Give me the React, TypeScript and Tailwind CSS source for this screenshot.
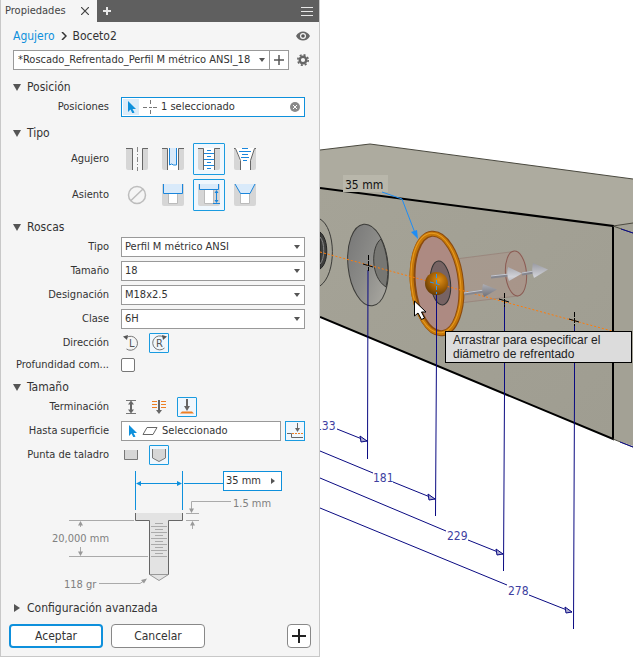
import { useState } from "react";
import type { ReactNode } from "react";

const threadFields = [
  { id: "thread-type", label: "Tipo", value: "Perfil M métrico ANSI" },
  { id: "thread-size", label: "Tamaño", value: "18" },
  { id: "thread-designation", label: "Designación", value: "M18x2.5" },
  { id: "thread-class", label: "Clase", value: "6H" },
];

const Walls = () => (
  <>
    <path d="M0 1h7v22H2a2 2 0 0 1-2-2zM15 1h7v20a2 2 0 0 1-2 2h-5z" fill="#d6d6d6" />
  </>
);

const holeTypes = [
  {
    name: "Agujero simple",
    icon: (
      <>
        <Walls />
        <path d="M7 1h9v22H7z" fill="#f5f5f5" />
        <path d="M0 1.500h6.500V23M22 1.500h-5.500V23" stroke="#666" fill="none" />
        <path d="M11.500 0v24" stroke="#888" strokeDasharray="5 2 1 2" />
      </>
    ),
  },
  {
    name: "Agujero de paso",
    icon: (
      <>
        <Walls />
        <path d="M6 1h10v22H6z" fill="#fff" />
        <path d="M7.500 1h7v16l-3 1-2-1-2 1z" fill="#d9eafa" />
        <path d="M7.500 1v17l2-1 2 1h3V1" stroke="#1a86dc" fill="none" />
        <path d="M0 1.500h5.500V23M22 1.500h-5.500V23" stroke="#666" fill="none" />
      </>
    ),
  },
  {
    name: "Agujero roscado",
    icon: (
      <>
        <Walls />
        <path d="M6 1h10v22H6z" fill="#fff" />
        <path d="M0 1.500h5.500V23M22 1.500h-5.500V23" stroke="#666" fill="none" />
        <path d="M6 6.500h10M6 12.500h10M6 18.500h10M9 3.500h4M9 9.500h4M9 15.500h4M9 21.500h4" stroke="#1a86dc" />
      </>
    ),
  },
  {
    name: "Agujero con rosca cónica",
    icon: (
      <>
        <path d="M0 1h22v20a2 2 0 0 1-2 2H2a2 2 0 0 1-2-2z" fill="#d6d6d6" />
        <path d="M1 1h20l-5 13v9H6v-9z" fill="#fff" />
        <path d="M0 1.500h1.500l5 12V23M22 1.500h-1.500l-4 12V23" stroke="#666" fill="none" />
        <path d="M8 1.500h6M5 4.500h12M8 7.500h6M7 10.500h8M9 13.500h4" stroke="#1a86dc" />
      </>
    ),
  },
];

const seatTypes = [
  {
    name: "Ninguno",
    icon: <path d="M5 17.500 17 6M19.500 12a8.500 8.500 0 1 1-17 0 8.500 8.500 0 0 1 17 0z" stroke="#bdbdbd" strokeWidth="1.500" fill="none" />,
  },
  {
    name: "Caja",
    icon: (
      <>
        <path d="M0 1h22v20a2 2 0 0 1-2 2H2a2 2 0 0 1-2-2z" fill="#d6d6d6" />
        <path d="M6.500 10v10.500h9V10" fill="#fff" stroke="#bbb" />
        <path d="M1.500 1h19v9.500h-19z" fill="#d9eafa" />
        <path d="M1.500 1v9.500h19V1" stroke="#1a86dc" fill="none" />
      </>
    ),
  },
  {
    name: "Refrentado",
    icon: (
      <>
        <path d="M0 1h22v20a2 2 0 0 1-2 2H2a2 2 0 0 1-2-2z" fill="#d6d6d6" />
        <path d="M6.500 7v13.500h9V7" fill="#fff" stroke="#bbb" />
        <path d="M1.500 1h19v5.500h-19z" fill="#d9eafa" />
        <path d="M1.500 1v5.500h19V1M15 20.500h7M18.500 8v11" stroke="#1a86dc" fill="none" />
        <path d="m16.500 10 2-3 2 3zM16.500 17l2 3 2-3z" fill="#1a86dc" />
      </>
    ),
  },
  {
    name: "Avellanado",
    icon: (
      <>
        <path d="M0 1h22v20a2 2 0 0 1-2 2H2a2 2 0 0 1-2-2z" fill="#d6d6d6" />
        <path d="M6.500 10v10.500h9V10" fill="#fff" stroke="#bbb" />
        <path d="M1 1h20l-5 9.500H6.500z" fill="#d9eafa" />
        <path d="m1 1 5.500 9.500H16L21 1" stroke="#1a86dc" fill="none" />
      </>
    ),
  },
];

const directions = [
  {
    name: "Rosca izquierda",
    icon: (
      <>
        <path d="M5.500 4.500a7 7 0 1 1 0 11.500" stroke="#777" fill="none" />
        <path d="M2 3.500 7 2l-1 5z" fill="#555" />
        <text x="8" y="14" fontSize="11" fill="#555">L</text>
      </>
    ),
  },
  {
    name: "Rosca derecha",
    icon: (
      <>
        <path d="M14.500 4a7 7 0 1 0 1 11" stroke="#777" fill="none" />
        <path d="M18 3.500 13 2l1 5z" fill="#555" />
        <text x="7" y="14" fontSize="11" fill="#555">R</text>
      </>
    ),
  },
];

const terminations = [
  {
    name: "Distancia",
    icon: (
      <>
        <path d="M5 3.500h10M5 16.500h10" stroke="#777" />
        <path d="M10 5v10" stroke="#666" strokeWidth="2" />
        <path d="m7 7.500 3-4 3 4zM7 12.500l3 4 3-4z" fill="#666" />
      </>
    ),
  },
  {
    name: "Pasante",
    icon: (
      <>
        <path d="M3 4.500h5M3 7.500h5M3 10.500h5M12 4.500h5M12 7.500h5M12 10.500h5" stroke="#ee7f24" />
        <path d="M10 3v12" stroke="#666" strokeWidth="2" />
        <path d="m7 13 3 4 3-4z" fill="#666" />
      </>
    ),
  },
  {
    name: "Hasta",
    icon: (
      <>
        <path d="M5 14.500h10l2 2H3z" fill="#ee7f24" />
        <path d="M10 2v9" stroke="#666" strokeWidth="2" />
        <path d="m7 9 3 5 3-5z" fill="#666" />
      </>
    ),
  },
];

const drillPoints = [
  { name: "Plana", icon: <path d="M3.500 5v9.500h13V5" fill="#d6d6d6" stroke="#777" /> },
  { name: "Angular", icon: <path d="M3.500 4v9l6.500 3.500 6.500-3.500V4" fill="#d6d6d6" stroke="#777" /> },
];

const dimensions = [
  { value: "133", x: 315, y: 430, line: "M337 429 367 441", end: [367, 441] },
  { value: "181", x: 373, y: 482, line: "M320 451 373 473M393 482 435 499", end: [435, 499] },
  { value: "229", x: 447, y: 540, line: "M320 478 446 531M468 540 503 554", end: [503, 554] },
  { value: "278", x: 508, y: 595, line: "M320 508 507 585M529 595 572 612", end: [572, 612] },
];

const Caret = () => (
  <svg className="pointer-events-none absolute right-1 top-2 h-1 w-2" viewBox="0 0 8 4">
    <path d="M1 0h6L4 4z" fill="#555" />
  </svg>
);

const Cursor = () => (
  <svg className="h-3 w-3" viewBox="0 0 12 12">
    <path d="M3 0v11l2.500-2.500L7.500 12.500l2-1-2-3.500H11z" fill="#0e90dc" />
  </svg>
);

const Section = ({ title, open = true }: { title: string; open?: boolean }) => (
  <button type="button" className="flex h-5 w-full items-center gap-1.5 pl-3 text-[12px] leading-5">
    <svg className="h-2 w-2" viewBox="0 0 8 8">
      <path d={open ? "M0 1h8L4 8z" : "M1 0v8l6-4z"} fill="#555" />
    </svg>
    {title}
  </button>
);

const Row = ({ label, htmlFor, children }: { label: string; htmlFor?: string; children: ReactNode }) => (
  <div className="flex items-center gap-3 pr-[14px]">
    {htmlFor ? (
      <label htmlFor={htmlFor} className="w-[108px] shrink-0 whitespace-nowrap text-right">
        {label}
      </label>
    ) : (
      <span className="w-[108px] shrink-0 whitespace-nowrap text-right">{label}</span>
    )}
    {children}
  </div>
);

type Option = { name: string; icon: ReactNode };

const IconGroup = ({ options, initial, large }: { options: Option[]; initial: number; large?: boolean }) => {
  const [active, setActive] = useState(initial);
  return (
    <div className={large ? "flex gap-1" : "flex gap-2"}>
      {options.map((item, index) => (
        <button
          key={item.name}
          type="button"
          aria-label={item.name}
          aria-pressed={index === active}
          onClick={() => setActive(index)}
          className={`flex items-center justify-center rounded-[1px] border ${large ? "size-8" : "size-5"} ${
            index === active ? "border-[#1a9be0] bg-[#f0f7fd]" : "border-transparent"
          }`}
        >
          {large ? (
            <svg className="h-6 w-[22px]" viewBox="0 0 22 24">{item.icon}</svg>
          ) : (
            <svg className="size-5 shrink-0" viewBox="0 0 20 20">{item.icon}</svg>
          )}
        </button>
      ))}
    </div>
  );
};

const HoleDiagram = () => (
  <div className="relative h-[133px]">
    <svg className="h-full w-[318px]" viewBox="1 465 318 133" fontSize="11" fill="none">
      <path d="M135.500 513h47v7.500H168.500v54l-9.500 6-9.500-6v-54h-14z" fill="#e3e3e3" />
      <path d="M135.500 513v7.500h14V575M182.500 513v7.500h-14V575" stroke="#666" />
      <path d="m149.500 574.500 9.500 6 9.500-6z" stroke="#999" />
      <path
        d="M151 526.500h16M151 532.500h16M151 538.500h16M151 544.500h16M151 550.500h16M151 556.500h16M155 523.500h8M155 529.500h8M155 535.500h8M155 541.500h8M155 547.500h8M155 553.500h8"
        stroke="#aaa"
      />
      <path d="M135.500 471v39M182.500 471v39M137 483.500h44M184 483.500h39" stroke="#0e90dc" />
      <path d="m136 483.500 5-2.500v5zM182 483.500l-5-2.500v5z" fill="#0e90dc" />
      <path
        d="M69 520.500h65M69 556.500h79M80.500 522v5M80.500 547v8M99 583.500h41l6-4M231 501.500h-39.500V511M186 513.500h13M186 520.500h13M192.500 522v7"
        stroke="#aaa"
      />
      <path
        d="m78 525.500 2.500-4.500 2.500 4.500zM78 551.500l2.500 4.500 2.500-4.500zM189 508.500l2.500 4.500 2.500-4.500zM190 525.500l2.500-4.500 2.500 4.500zM141 580l6-1.500-3 5z"
        fill="#999"
      />
      <text x="52" y="542" fill="#808080">20,000 mm</text>
      <text x="233" y="507" fill="#808080">1.5 mm</text>
      <text x="64" y="588" fill="#808080">118 gr</text>
    </svg>
    <div className="absolute left-[222px] top-1.5 flex h-5 w-[59px] items-center border border-[#0e90dc] bg-white">
      <input aria-label="Diámetro de refrentado" defaultValue="35 mm" className="w-full min-w-0 pl-0.5 outline-none" />
      <svg className="mr-1.5 h-1.5 w-1 shrink-0" viewBox="0 0 4 6">
        <path d="M0 0v6l4-3z" fill="#555" />
      </svg>
    </div>
  </div>
);

const Scene = () => (
  <svg className="absolute inset-0 h-full w-full" viewBox="320 0 313 657" preserveAspectRatio="xMinYMin slice" fill="none">
    <defs>
      <linearGradient id="front" x1="0" y1="0" x2="1" y2="1">
        <stop offset="0" stopColor="#a5a397" />
        <stop offset="1" stopColor="#9f9d91" />
      </linearGradient>
      <linearGradient id="bore" x1="0" y1="0" x2="1" y2="1">
        <stop offset="0" stopColor="#747474" />
        <stop offset="0.500" stopColor="#8c8c89" />
        <stop offset="1" stopColor="#b0aea6" />
      </linearGradient>
      <radialGradient id="ball" cx="0.600" cy="0.350" r="0.700">
        <stop offset="0" stopColor="#dd8f18" />
        <stop offset="0.500" stopColor="#a76306" />
        <stop offset="1" stopColor="#643a04" />
      </radialGradient>
      <linearGradient id="cone" x1="0" y1="0" x2="0" y2="1">
        <stop offset="0" stopColor="#999aa2" />
        <stop offset="0.400" stopColor="#d0d1d7" />
        <stop offset="1" stopColor="#6f7078" />
      </linearGradient>
    </defs>

    <path d="M320 150 370 144 633 179V224L613 226 320 188z" fill="#adab9f" />
    <path d="M613 226 633 223V446L613 439z" fill="#a3a195" />
    <path d="M320 188 613 226V439L320 317z" fill="url(#front)" />
    <path d="M320 150 370 144 633 179M613 226 633 223" stroke="#4a493f" />
    <path d="M320 188 613 226V439L320 317" stroke="#000" strokeWidth="2" />
    <path d="m613 226 20 7M613 439l20 8" stroke="#4a493f" />
    <path d="m621 229 12 4M620 442l13 5" stroke="#0a0a8c" />

    <path d="M320 219c16 9 17 55 0 67" stroke="#3b3b38" />
    <path d="M320 232c9 7 9 31 0 37z" fill="#3f3f3d" stroke="#222" />
    <path d="M320 237c5 5 5 22 0 27" stroke="#888" />
    <ellipse cx="368" cy="265" rx="20" ry="41" transform="rotate(-6 368 265)" fill="url(#bore)" stroke="#3b3b38" />
    <path d="M381 239c-10 7-11 38 5 48 4-16 1-36-5-48z" fill="#777773" stroke="#3b3b38" />

    <path d="M440 261 514 251.500A10.500 22 0 0 1 518 296L443 305z" fill="#b08a80" fillOpacity="0.300" />
    <path d="m440 261 74-9.500M443 305l75-9" stroke="#927a72" strokeOpacity="0.600" />
    <ellipse cx="516" cy="273.500" rx="10.500" ry="22.500" transform="rotate(-5 516 273.500)" fill="#b08a80" fillOpacity="0.250" stroke="#8b5a52" />

    <ellipse cx="437" cy="283.500" rx="24" ry="50" transform="rotate(-6 437 283.500)" fill="#ad8a82" stroke="#8a4a10" strokeWidth="6" />
    <ellipse cx="436.500" cy="283.500" rx="24.500" ry="50" transform="rotate(-6 436.500 283.500)" stroke="#c47708" strokeWidth="4" />
    <ellipse cx="436" cy="283" rx="24.500" ry="50" transform="rotate(-6 436 283)" stroke="#e89b24" />
    <ellipse cx="440.500" cy="283" rx="10" ry="22" transform="rotate(-6 440.500 283)" fill="#776363" stroke="#333" />
    <path d="M320 252 612 331" stroke="#ff7c0a" strokeDasharray="2 2" />
    <circle cx="436.500" cy="283.500" r="11.500" fill="url(#ball)" />

    <path d="m464 294 20-3M491 277l18-2M522 274l12-2" stroke="#85868e" strokeWidth="3" />
    <path d="m464 293 20-3M491 276l18-2M522 273l12-2" stroke="#c6c8d0" />
    <path d="M483 284 497 289.500 484 297q-3-6-1-13zM508 267 522 273.500 509 281q-3-7-1-14zM533 263 548 269.500 534 278q-3-7-1-15z" fill="url(#cone)" />

    <path d="M368 270 367.500 459M436.500 295V350L435.500 516M504.500 303V392L503.500 571M574.500 324V392L573.500 629" stroke="#0a0a82" />
    <path d="M368.500 255v16M363 264l10 3M504.500 293v14M499 299l10 3M574.500 312v14M569 319l10 3" stroke="#000" strokeDasharray="5 1" />
    <path d="M436.500 274v20M430 282l11 3" stroke="#2996f5" strokeDasharray="4 2" />

    <g fontSize="12" fill="#3f3f9f">
      {dimensions.map((item) => (
        <g key={item.value}>
          <path d={item.line} stroke="#0a0a82" />
          <path
            d="M0 0-7-5-6 1z"
            transform={`translate(${item.end[0]} ${item.end[1]})`}
            fill="#aaaad0"
            stroke="#0a0a82"
          />
          <text x={item.x} y={item.y}>{item.value}</text>
        </g>
      ))}
    </g>

    <path d="M343 175h45v17h-45z" fill="#b9b7ab" />
    <text x="345" y="189" fontSize="12" fill="#111">35 mm</text>
    <path d="M382 192 402 199 415 233" stroke="#1e8df5" />
    <path d="m418 239-7-7 6-2z" fill="#1e8df5" />
    <path d="M414.500 301v15l3.500-3 3.500 6.500 3-1.500-3-6h4.500z" fill="#fff" stroke="#000" />
  </svg>
);

export default function App() {
  return (
    <div className="flex min-h-screen bg-white font-['DejaVu_Sans_Condensed','Noto_Sans',sans-serif] text-[11px] leading-4 text-[#333]">
      <aside className="flex w-80 shrink-0 flex-col border-x border-b border-[#c8c8c8] bg-[#f5f5f5]">
        <div className="flex h-[22px] items-center bg-[#5f5f5f] text-white">
          <div className="flex h-full w-24 items-center justify-between bg-[#f5f5f5] pl-1 pr-2 text-[#444]">
            Propiedades
            <button type="button" aria-label="Cerrar">
              <svg className="size-2" viewBox="0 0 8 8">
                <path d="m0 0 8 8M8 0 0 8" stroke="#444" strokeWidth="1.200" />
              </svg>
            </button>
          </div>
          <button type="button" aria-label="Añadir ficha" className="ml-1.5">
            <svg className="size-2" viewBox="0 0 8 8">
              <path d="M4 0v8M0 4h8" stroke="#e8e8e8" strokeWidth="2" />
            </svg>
          </button>
          <button type="button" aria-label="Menú" className="ml-auto mr-1.5">
            <svg className="h-[9px] w-3" viewBox="0 0 12 9">
              <path d="M0 .5h12M0 4.500h12M0 8.500h12" stroke="#e8e8e8" />
            </svg>
          </button>
        </div>

        <div className="flex h-7 items-center gap-1.5 pl-3 pr-[9px] text-[12px]">
          <a href="#agujero" className="text-[#0e90dc]">Agujero</a>
          <svg className="h-2 w-1.5" viewBox="0 0 6 8">
            <path d="m1 0 4 4-4 4" stroke="#333" strokeWidth="1.500" fill="none" />
          </svg>
          <span>Boceto2</span>
          <button type="button" aria-label="Vista preliminar" className="ml-auto">
            <svg className="h-2.5 w-3.5" viewBox="0 0 14 10">
              <path d="M0 5c3-6 11-6 14 0-3 6-11 6-14 0z" fill="#666" />
              <circle cx="7" cy="5" r="3" fill="#f5f5f5" />
              <circle cx="7" cy="5" r="1.800" fill="#555" />
            </svg>
          </button>
        </div>

        <div className="flex items-center pl-3 pr-2.5">
          <div className="relative min-w-0 flex-1">
            <select aria-label="Valor predefinido" className="h-5 w-full appearance-none border border-[#999] bg-white pl-1 pr-[18px] leading-4">
              <option>*Roscado_Refrentado_Perfil M métrico ANSI_18</option>
            </select>
            <Caret />
          </div>
          <button type="button" aria-label="Crear valor predefinido" className="-ml-px flex size-5 items-center justify-center border border-[#999] bg-white">
            <svg className="size-2.5" viewBox="0 0 10 10">
              <path d="M5 0v10M0 5h10" stroke="#555" strokeWidth="1.500" />
            </svg>
          </button>
          <button type="button" aria-label="Configuración" className="ml-2">
            <svg className="size-3" viewBox="0 0 12 12">
              <circle cx="6" cy="6" r="3.300" stroke="#666" strokeWidth="2.400" fill="none" />
              <circle cx="6" cy="6" r="5.200" stroke="#666" strokeWidth="1.600" strokeDasharray="2.040 2.040" fill="none" />
            </svg>
          </button>
        </div>

        <div className="mt-[7px]">
          <Section title="Posición" />
          <Row label="Posiciones" htmlFor="positions">
            <div className="flex h-5 min-w-0 flex-1 items-center border border-[#0e90dc] bg-white pl-px pr-1">
              <span className="flex size-4 items-center justify-center bg-[#dcecf9]">
                <Cursor />
              </span>
              <svg className="mx-1 h-3.5 w-3.5 shrink-0" viewBox="0 0 14 14">
                <path d="M7.500 0v4M7.500 10v4M0 7.500h4M10 7.500h4M6 7.500h3" stroke="#777" />
              </svg>
              <input id="positions" readOnly value="1 seleccionado" className="w-full min-w-0 flex-1 outline-none" />
              <button type="button" aria-label="Borrar selección">
                <svg className="size-2.5" viewBox="0 0 10 10">
                  <circle cx="5" cy="5" r="5" fill="#8a8a8a" />
                  <path d="m3 3 4 4M7 3 3 7" stroke="#fff" />
                </svg>
              </button>
            </div>
          </Row>
        </div>

        <div className="mt-1.5">
          <Section title="Tipo" />
          <div className="flex flex-col gap-1">
            <Row label="Agujero">
              <IconGroup options={holeTypes} initial={2} large />
            </Row>
            <Row label="Asiento">
              <IconGroup options={seatTypes} initial={2} large />
            </Row>
          </div>
        </div>

        <div className="mt-1.5">
          <Section title="Roscas" />
          <div className="flex flex-col gap-1">
            {threadFields.map((item) => (
              <Row key={item.id} label={item.label} htmlFor={item.id}>
                <div className="relative h-5 min-w-0 flex-1">
                  <select id={item.id} className="h-5 w-full appearance-none border border-[#999] bg-white px-[3px] leading-4">
                    <option>{item.value}</option>
                  </select>
                  <Caret />
                </div>
              </Row>
            ))}
            <Row label="Dirección">
              <IconGroup options={directions} initial={1} />
            </Row>
            <Row label="Profundidad com..." htmlFor="full-depth">
              <input id="full-depth" type="checkbox" className="size-3.5 appearance-none rounded-[2px] border border-[#777] bg-white" />
            </Row>
          </div>
        </div>

        <div className="mt-1">
          <Section title="Tamaño" />
          <div className="flex flex-col gap-1">
            <Row label="Terminación">
              <IconGroup options={terminations} initial={2} />
            </Row>
            <Row label="Hasta superficie" htmlFor="to-surface">
              <div className="flex min-w-0 flex-1 gap-1">
                <div className="flex h-5 min-w-0 flex-1 items-center border border-[#999] bg-white pl-1">
                  <Cursor />
                  <svg className="mx-1 h-2 w-4 shrink-0" viewBox="0 0 16 8">
                    <path d="M5 .5h10L11 7.500H1z" stroke="#666" fill="#fff" />
                  </svg>
                  <input id="to-surface" readOnly value="Seleccionado" className="w-full min-w-0 flex-1 outline-none" />
                </div>
                <button type="button" aria-label="Extender superficie" className="flex size-5 items-center justify-center border border-[#1a9be0] bg-[#f0f7fd]">
                  <svg className="size-5 shrink-0" viewBox="0 0 20 20">
                    <path d="M2 12.500h4.500v4H18" stroke="#666" fill="none" />
                    <path d="M7 12.500h11" stroke="#ee7f24" strokeDasharray="2 1" />
                    <path d="M12.500 2v6" stroke="#666" />
                    <path d="m10 7 2.500 4L15 7z" fill="#666" />
                  </svg>
                </button>
              </div>
            </Row>
            <Row label="Punta de taladro">
              <IconGroup options={drillPoints} initial={1} />
            </Row>
          </div>
          <HoleDiagram />
        </div>

        <Section title="Configuración avanzada" open={false} />
        <div className="mb-2 mt-1.5 flex gap-2 px-2 text-[12px]">
          <button type="button" className="h-6 w-[94px] rounded border-2 border-[#0e90dc] bg-white leading-5">Aceptar</button>
          <button type="button" className="h-6 w-[94px] rounded border border-[#888] bg-white leading-5">Cancelar</button>
          <button type="button" aria-label="Aplicar y crear nuevo" className="ml-auto flex size-6 items-center justify-center rounded border border-[#888] bg-white">
            <svg className="size-3.5" viewBox="0 0 14 14">
              <path d="M7 0v14M0 7h14" stroke="#222" strokeWidth="2" />
            </svg>
          </button>
        </div>
      </aside>

      <main className="relative min-w-0 flex-1 overflow-hidden">
        <Scene />
        <div
          role="tooltip"
          className="absolute left-[125px] top-[331px] w-[187px] border border-black bg-[#dcdcdc] px-[7px] py-px font-['Liberation_Sans',sans-serif] text-[12px] leading-[14px] text-[#222]"
        >
          Arrastrar para especificar el diámetro de refrentado
        </div>
      </main>
    </div>
  );
}
